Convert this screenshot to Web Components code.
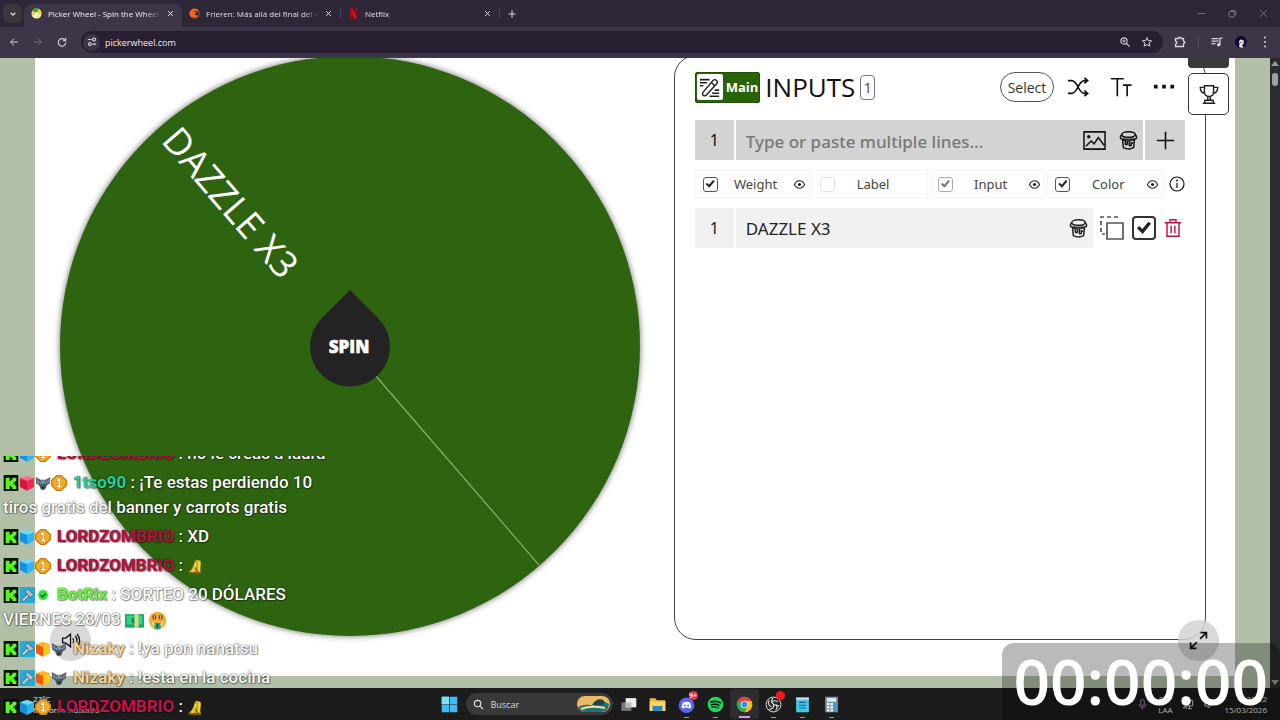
<!DOCTYPE html>
<html lang="es">
<head>
<meta charset="utf-8">
<title>Picker Wheel - Spin the Wheel to Decide</title>
<style>
html,body{height:100%;margin:0}
body{background:#1c1c1c;font-family:"Open Sans","Noto Sans",sans-serif;overflow:hidden}
</style>
</head>
<body>
<stream-scene></stream-scene>
<script>
const stroke = (d, w = 1.8, extra = '') => `<g fill="none" stroke="currentColor" stroke-width="${w}" ${extra}>${d}</g>`;
const cube = (a, b, c) => `<path d="M12 1 22.500 5v13L12 23.500 1.500 18V5z" fill="${a}"/><path d="M1.500 5 12 9v14.500L1.500 18z" fill="${b}"/><path d="M22.500 5 12 9v14.500L22.500 18z" fill="${c}"/>`;
const ICONS = {
  down: stroke('<path d="m5 8 7 7 7-7"/>', 4),
  back: stroke('<path d="M21 12H4M12 4l-8 8 8 8"/>', 2.4),
  forward: stroke('<path d="M3 12h17M12 4l8 8-8 8"/>', 2.4),
  reload: stroke('<path d="M19.500 8A9 9 0 1 0 21 13"/><path d="M21 2v7h-7"/>', 2.6),
  tune: stroke('<path d="M2 6h9M13 17h9"/><circle cx="17" cy="6" r="3.500"/><circle cx="7" cy="17" r="3.500"/>', 2.6),
  close: stroke('<path d="m4 4 16 16M20 4 4 20"/>', 3.4),
  thinclose: stroke('<path d="m3 3 18 18M21 3 3 21"/>', 2),
  plus: stroke('<path d="M12 1v22M1 12h22"/>', 3.4),
  bigplus: stroke('<path d="M12 1v22M1 12h22"/>', 2),
  minimize: stroke('<path d="M2 12h20"/>', 2),
  restore: stroke('<rect x="3" y="7" width="14" height="14" rx="3"/><path d="M8 4h9q4 0 4 4v9"/>', 2.4),
  zoom: stroke('<circle cx="9.500" cy="9.500" r="7.500"/><path d="m15 15 8 8M9.500 6v7M6 9.500h7"/>', 2.6),
  star: stroke('<path d="m12 1.500 3 7 8 .7-6 5.200 1.900 7.600-6.900-4-6.900 4L7 14.400 1 9.200l8-.7z"/>', 2.4),
  puzzle: stroke('<path d="M3 5h6a2.500 2.500 0 0 1 5 0h5v5.500a2.500 2.500 0 0 1 0 5V21H3v-4.500a3 3 0 0 0 0-6z"/>', 2.6),
  media: stroke('<path d="M1 5h14M1 10h14M1 15h8M18 17V4h5"/>', 2.5) + '<circle cx="15.500" cy="17.500" r="3.500" fill="currentColor"/>',
  dotsv: '<g fill="currentColor"><circle cx="12" cy="3" r="2"/><circle cx="12" cy="12" r="2"/><circle cx="12" cy="21" r="2"/></g>',
  dotsh: '<path fill="currentColor" d="M1 9.500h4v4H1zM10 9.500h4v4h-4zM19 9.500h4v4h-4z"/>',
  picker: '<circle cx="12" cy="12" r="11" fill="#e9d94a"/><path d="M12 12 3 5.500A11 11 0 0 1 17 2.200z" fill="#4f9a43"/><path d="M12 12 17 2.200A11 11 0 0 1 22.500 14z" fill="#e6d83c"/><path d="M12 12 22.500 14A11 11 0 0 1 12 23z" fill="#f1e9a0"/><path d="M12 12 2 17a11 11 0 0 0 9 6z" fill="#e7f0ee"/><circle cx="12" cy="12" r="3" fill="#fff"/>',
  crunchy: '<circle cx="12" cy="12" r="11" fill="#f26522"/><path d="M22.500 12a8 8 0 0 0-15.500 2q0 4 3 7 9 3 12.500-9z" fill="#2e2737"/><path d="M13 7.500a7 7 0 1 0 7 8 3.800 3.800 0 1 1-2.500-6.500 8 8 0 0 0-4.500-1.500z" fill="#f26522"/>',
  netflix: '<path d="M5 1h5v22l-5 .5z" fill="#b1060f"/><path d="M14 1h5v22.500l-5-.5z" fill="#b1060f"/><path d="M5 1h5l9 22.500-5-.5z" fill="#e50914"/>',
  avatar: '<circle cx="12" cy="12" r="12" fill="#0d0a45"/><path d="M7 6q6-4 10 2l1 6q-2 4-4 4l3 5q-6 2-9-2l1-5z" fill="#eed7d5"/><path d="M4 9Q7 1 16 4l2 4-7-1-3 3-1 6q-4-3-3-7z" fill="#08050f"/><path d="M10 13h3M15 12h2" stroke="#a3394a" stroke-width="1.500"/>',
  edit: stroke('<path d="m5 17 11-13q2-2 4 0t0 4L9 20q-2 2.500-4 1t0-4zM14 6l4 4"/>', 1.6) + stroke('<path d="M1 3h11M1 6.500h8M1 10h4M18 15h5M15 18.500h8M12 22h11"/>', 1.8),
  shuffle: stroke('<path d="M1 5h4c7 0 7 14 14 14h3M1 19h4c7 0 7-14 14-14h3M19 2l3.500 3L19 8M19 16l3.500 3-3.500 3"/>', 1.8),
  texts: stroke('<path d="M1 3h14M8 3v19M14 10h9.500M18.700 10v12"/>', 1.8),
  picture: stroke('<path d="M1 3h22v18H1zM3 18l5.500-5.500 3 3L16 9l6 8"/>', 1.6) + '<circle cx="6" cy="8" r="1.800" fill="currentColor"/>',
  bucket: stroke('<ellipse cx="12" cy="4.500" rx="8.500" ry="3.500"/><path d="M3.500 4.500Q0 9 3.500 10q8.500 3 17 0 3.500-1 0-5.500M4.500 11l1 10q6.500 3.500 13 0l1-10"/><path d="M8 11.500v5q1.200 1.500 2.500 0v-4M13 12v6q1.200 1.500 2.500 0v-3q1.500 1.500 2-.5"/>', 1.9) + '<path d="M5 7q7 2.500 14 0v2.500q-7 2.500-14 0z" fill="currentColor" opacity=".45"/>',
  eye: stroke('<path d="M1 12q4-8 11-8t11 8q-4 8-11 8T1 12z"/>', 2.3) + '<circle cx="12" cy="12" r="3.500" fill="currentColor"/>',
  info: stroke('<circle cx="12" cy="12" r="10.500"/><path d="M12 10v8"/>', 1.8) + '<circle cx="12" cy="6.700" r="1.400" fill="currentColor"/>',
  duplicate: stroke('<path d="M7 7h16v16H7z"/>', 1.7) + stroke('<path d="M18 1H1v17h4"/>', 1.7, 'stroke-dasharray="4 3"'),
  trash: stroke('<path d="M1 5h22M4 5v18h16V5M8 5V1h8v4M9.500 9v10M14.500 9v10"/>', 1.9),
  trophy: stroke('<path d="M6.500 2h11v7q0 6-5.500 6t-5.500-6zM6.500 4H1.500q0 7 5.500 7M17.500 4h5q0 7-5.500 7M10.500 15v4M13.500 15v4M7 23v-3.500h10V23zM4.500 23h15"/>', 1.7),
  sound: stroke('<path d="M2 9h4l6-5v16l-6-5H2zM15 9q2 3 0 6M18 6q4.500 6 0 12M20.500 3.500q6 8.500 0 17"/>', 1.7),
  expand: stroke('<path d="m14 10 8-8M14.500 2H22v7.500M10 14l-8 8M2 14.500V22h7.500"/>', 2.2),
  search: stroke('<circle cx="10" cy="10" r="7"/><path d="m15 15 7 7"/>', 2.4),
  windows: '<path d="M1 1h10.500v10.500H1zM12.500 1H23v10.500H12.500zM1 12.500h10.500V23H1zM12.500 12.500H23V23H12.500z" fill="#43b9f3"/><path d="M1 1h10.500v10.500H1z" fill="#86dcfb"/>',
  taskview: '<path d="M2 9h14v12H2z" fill="#777"/><path d="M8 3h15v13H8z" fill="#eee"/><path d="M8 9h8v7H8z" fill="#bbb"/>',
  folder: '<path d="M1 3h8l2 3h12v15H1z" fill="#f2b63c"/><path d="M1 8h22v13H1z" fill="#ffd866"/><path d="M5 14h14v7H5z" fill="#2088c7"/>',
  discord: '<circle cx="12" cy="13" r="11" fill="#5865f2"/><path d="M7 9q5-2 10 0l2 7-3 2-1.500-1.500h-5L8 18l-3-2z" fill="#fff"/><circle cx="9.700" cy="13.300" r="1.400" fill="#5865f2"/><circle cx="14.300" cy="13.300" r="1.400" fill="#5865f2"/>',
  spotify: '<circle cx="12" cy="12" r="11" fill="#1ed760"/><g fill="none" stroke="#151515" stroke-linecap="round"><path d="M5.500 8.500q7-2.500 13.500 1" stroke-width="2.400"/><path d="M6 12.500q6-2 11.500 1" stroke-width="2"/><path d="M6.500 16q5-1.500 9.500 1" stroke-width="1.800"/></g>',
  chrome: '<circle cx="12" cy="12" r="11" fill="#34a853"/><path d="M12 12 2.500 6.500A11 11 0 0 1 21.500 6.500z" fill="#ea4335"/><path d="M12 7h9.800A11 11 0 0 1 12 23l5-9z" fill="#fbbc04"/><circle cx="12" cy="12" r="5.300" fill="#fff"/><circle cx="12" cy="12" r="4.200" fill="#4285f4"/>',
  obs: '<circle cx="12" cy="12" r="10.500" fill="#222" stroke="#ddd" stroke-width="1.400"/><g fill="none" stroke="#ddd" stroke-width="1.700"><path d="M11 3q-4 6 2 9M20 14q-7-2-8-1M6 19q7-1 6-7"/><path d="M6 6q-3 7 3 9M18 8q-6-3-9 1M15 20q4-4 0-8"/></g>',
  notepad: '<path d="M3 3h18v20H3z" fill="#49c5e8"/><path d="M3 2h18v3H3z" fill="#d7e7ee"/><path d="M7 9h10M7 13h10M7 17h10" stroke="#12668a" stroke-width="1.600"/>',
  calc: '<path d="M3 1h18v22H3z" fill="#7592a5"/><path d="M5.500 3h13v5h-13z" fill="#d6f0ff"/><path d="M5.500 10h3.500v3H5.500zM10.500 10H14v3h-3.500zM5.500 14.500h3.500v3H5.500zM10.500 14.500H14v3h-3.500zM5.500 19h3.500v3H5.500zM10.500 19H14v3h-3.500z" fill="#fff"/><path d="M15.500 10h3v12h-3z" fill="#2e9bdc"/>',
  mic: stroke('<rect x="8" y="1" width="8" height="13" rx="4"/><path d="M4 11q0 7 8 7t8-7M12 18v5"/>', 2),
  net: stroke('<path d="M6 3h15v12H6zM2 21v-4h5v5M11 21h8M14 15v6"/>', 2),
  vol: stroke('<path d="M2 9h4l5-4v14l-5-4H2zM15 8q3 4 0 8"/>', 2),
  k: '<path d="M1 0h22v24H1z" fill="#061006"/><path d="M4 4h6v5h2V7h2V4h6v5h-2v2h-2v3h2v2h2v5h-6v-3h-2v-2h-2v5H4z" fill="#53fc18"/>',
  cubeblue: cube('#6fd8fa', '#1691dc', '#2fb6ef'),
  cubepink: cube('#ff6a8e', '#d0193f', '#ed2a57'),
  cubeorange: cube('#ffb52e', '#ee5a10', '#ffc917'),
  coin: '<path d="M8 0h8l8 8v8l-8 8H8l-8-8V8z" fill="#c97d10"/><path d="M9 2h6l7 7v6l-7 7H9l-7-7V9z" fill="#f9ad20"/><path d="M8 7l3.500-2.500H14V16h2v3H8.500v-3H11V9H8z" fill="#fff" stroke="#a8690c" stroke-width=".7"/>',
  wolf: '<path d="m1 3 7 4h8l7-4-1 10-4 2-3 7h-6l-3-7-4-2z" fill="#4b535d"/><path d="m2 5 5 4-1 4-3-1zM22 5l-5 4 1 4 3-1z" fill="#87788f"/><path d="M8 8h8l-4 7z" fill="#8a949e"/><path d="M6 11h4l-1 3zM18 11h-4l1 3z" fill="#3fd0ff"/><path d="M10 18h4l-2 3z" fill="#161a20"/>',
  hammer: '<path d="M1 0h23v24H1z" fill="#25a9d8"/><path d="m4 19 9-9 3 3-9 9z" fill="#c3cdd2" stroke="#2c5566"/><path d="m9 7 4-4 9 8-5 5z" fill="#b0bdc4" stroke="#2c5566"/>',
  verified: '<path d="m12 1 3.500 2 4 .5.500 4.500L23 12l-3 4-.5 4.500-4 .5-3.500 2-3.500-2-4-.5L4 16l-3-4 3-4 .5-4.500 4-.5z" fill="#35e13c"/><path d="m7 12 4 4 6.500-7" fill="none" stroke="#0b6b18" stroke-width="2.500"/>',
  bell: '<path d="M2 20q5-3 8-11l2-6q2-3 6-1 4 1 3 6l-1 8 1 5z" fill="#c9ab22"/><path d="M13 6q-1 9-6 14M18 3q1 8-1 17" stroke="#efdb4a" stroke-width="2.500" fill="none"/><path d="m1 20 9 0 12 0-2 3-17-1z" fill="#7a551a"/><path d="m12 13 5 7" stroke="#7a641a" stroke-width="2"/>',
  cash: '<path d="M0 4h24v17H0z" fill="#14a866"/><path d="M2 6h20v11H2z" fill="#35cf88"/><circle cx="12" cy="12" r="4" fill="#0f8d55"/><path d="M12 4h5v17h-5z" fill="#e4d98b"/>',
  rich: '<circle cx="12" cy="12" r="11" fill="#f8ab36"/><ellipse cx="8" cy="8" rx="2.500" ry="3.500" fill="#7b5412"/><ellipse cx="16" cy="8" rx="2.500" ry="3.500" fill="#7b5412"/><path d="M8 5v6M16 5v6" stroke="#eedd98"/><path d="M5 14q7 4 14 0-1 6-7 6t-7-6z" fill="#fff"/><path d="M8 15h8v7q-4 3-8 0z" fill="#28a767"/><path d="M12 16v5" stroke="#0b5a34" stroke-width="2"/>'
};

/* Small helper: every component declares its CSS and markup once. */
function define(name, css, html) {
  customElements.define(name, class extends HTMLElement {
    constructor() {
      super();
      const root = this.attachShadow({mode: 'open'});
      const t = document.createElement('template');
      t.innerHTML = `<style>*{box-sizing:border-box}button,input{font:inherit;color:inherit;border:0;padding:0;margin:0;background:none}button{display:grid;place-items:center}a{color:inherit;text-decoration:none}${css}</style>` + (typeof html === 'function' ? '' : html);
      root.append(t.content.cloneNode(true));
    }
    connectedCallback() {
      if (typeof html === 'function' && !this.ready) {
        const t = document.createElement('template');
        t.innerHTML = html(this);
        this.shadowRoot.append(t.content.cloneNode(true));
      }
      this.ready = true;
    }
  });
}

define('ui-icon', ':host{display:inline-block;width:var(--size,16px);height:var(--size,16px);flex:none}svg{display:block;width:100%;height:100%;overflow:visible}',
  el => `<svg viewBox="0 0 24 24" aria-hidden="true">${ICONS[el.getAttribute('name')]}</svg>`);

define('browser-tab', `
  :host{display:block;flex:0 1 158px;min-width:0;font-size:8px;color:#e2dde8}
  .tab{height:23px;display:flex;align-items:center;gap:6px;padding:0 8px 4px 7px;border-radius:7px 7px 0 0}
  :host([active]) .tab{background:#3d3548;color:#f4f1f7}
  a{flex:1;min-width:0;overflow:hidden;white-space:nowrap;font-weight:500;mask-image:linear-gradient(90deg,#000 86%,transparent)}
  .fav{--size:11px}button ui-icon{--size:7px}`,
  el => `<div class="tab"><ui-icon class="fav" name="${el.getAttribute('icon')}"></ui-icon><a href="#"><slot></slot></a><button aria-label="Cerrar"><ui-icon name="close"></ui-icon></button></div>`);

define('browser-tabs', `
  :host{display:flex;align-items:end;height:27px;background:#2e2737;color:#d5cedc;padding:0 12px 0 3px}
  .list{align-self:center;width:19px;height:19px;border-radius:6px;background:#3b363c;margin-right:2px;--size:8px}
  .line{width:1px;height:11px;margin-bottom:8px;background:#4a4353}
  .new{height:23px;padding:0 8px 4px;--size:8px}
  .win{margin-left:auto;display:flex;gap:22px;height:23px;padding-bottom:4px;color:#8b8493;--size:9px}`,
  `<button class="list" aria-label="Buscar pestañas"><ui-icon name="down"></ui-icon></button>
  <browser-tab active icon="picker">Picker Wheel - Spin the Wheel to Decide</browser-tab>
  <browser-tab icon="crunchy">Frieren: Más allá del final del viaje</browser-tab><span class="line"></span>
  <browser-tab icon="netflix">Netflix</browser-tab><span class="line"></span>
  <button class="new" aria-label="Nueva pestaña"><ui-icon name="plus"></ui-icon></button>
  <div class="win"><button aria-label="Minimizar"><ui-icon name="minimize"></ui-icon></button><button aria-label="Restaurar"><ui-icon name="restore"></ui-icon></button><button aria-label="Cerrar"><ui-icon name="thinclose"></ui-icon></button></div>`);

define('browser-toolbar', `
  :host{box-sizing:border-box;display:flex;align-items:center;height:31px;background:#3d3548;color:#d9d2e2;padding:0 9px 1px;gap:14px;--size:10px}
  .off{color:#776d83}
  .bar{flex:1;display:flex;align-items:center;height:22px;background:#281f31;border-radius:11px;padding:0 11px 0 2px;gap:12px}
  .site{width:17px;height:17px;border-radius:50%;background:#3d3548}
  input{flex:1;min-width:0;font-size:9px;font-weight:500;color:#f0edf3;outline:0;margin-left:-7px}
  .tools{display:flex;align-items:center;gap:12px;--size:12px;margin-left:-3px}
  .sep{width:1px;height:10px;background:#5a5166}`,
  `<button aria-label="Atrás"><ui-icon name="back"></ui-icon></button><button class="off" aria-label="Adelante"><ui-icon name="forward"></ui-icon></button><button aria-label="Recargar"><ui-icon name="reload"></ui-icon></button>
  <div class="bar"><button class="site" aria-label="Información del sitio"><ui-icon name="tune"></ui-icon></button><input aria-label="Dirección" value="pickerwheel.com"><button aria-label="Zoom"><ui-icon name="zoom"></ui-icon></button><button aria-label="Favorito"><ui-icon name="star"></ui-icon></button></div>
  <div class="tools"><button aria-label="Extensiones"><ui-icon name="puzzle"></ui-icon></button><span class="sep"></span><button aria-label="Medios"><ui-icon name="media"></ui-icon></button><button aria-label="Perfil"><ui-icon name="avatar"></ui-icon></button><button aria-label="Menú"><ui-icon name="dotsv"></ui-icon></button></div>`);

define('picker-wheel', `
  :host{display:grid;place-items:start center;padding-right:8px}
  svg{width:600px;max-width:100%;margin-top:-12px;overflow:visible;display:block}
  .disc{filter:drop-shadow(0 0 3px rgba(0,0,0,.6))}
  text{fill:#fff}
  .name{font-size:37px}
  .spin{font-size:17px;font-weight:800;text-anchor:middle;stroke:#fff;stroke-width:.5px}`,
  `<svg viewBox="0 0 600 600" role="img" aria-label="Ruleta">
  <circle class="disc" cx="300" cy="300" r="290" fill="#2e6410"/>
  <g transform="rotate(49.200 300 300)"><path d="M300 300h289" stroke="#8db06f" stroke-width="1.200"/><text class="name" x="21" y="310">DAZZLE X3</text></g>
  <path d="M300 244 328 272A40 40 0 1 1 272 272z" fill="#232323"/>
  <text class="spin" x="299" y="307">SPIN</text></svg>`);

define('check-box', `
  :host{display:contents}
  input{appearance:none;flex:none;width:24px;height:24px;border:2px solid #333;border-radius:4px;display:grid;place-items:center;color:#222}
  input:checked::before{content:"";width:14px;height:14px;background:currentColor;clip-path:polygon(0 52%,16% 36%,38% 58%,82% 6%,100% 20%,40% 92%)}`,
  el => `<input type="checkbox" aria-label="${el.getAttribute('label')}" ${el.hasAttribute('checked') ? 'checked' : ''}>`);

define('column-toggle', `
  :host{box-sizing:border-box;display:flex;align-items:center;min-width:0;height:28px;padding:0 3px 0 7px;border:1px solid #f4f4f4;font-family:"Noto Sans",sans-serif;color:#444}
  label{flex:1;text-align:center;font-size:13px}
  .slot{width:13px;height:13px;--size:11px;color:#222}
  input{appearance:none;flex:none;width:15px;height:15px;border:1px solid #555;border-radius:3px;display:grid;place-items:center;color:#222}
  input:checked::before{content:"";width:9px;height:9px;background:currentColor;clip-path:polygon(0 52%,16% 36%,38% 58%,82% 6%,100% 20%,40% 92%)}
  input:disabled{color:#777;border-color:#aaa}
  input:not(:checked){border-color:#e4e4e4}`,
  el => `<input id="c" type="checkbox" ${el.hasAttribute('checked') ? 'checked' : ''} ${el.hasAttribute('disabled') ? 'disabled' : ''}><label for="c"><slot></slot></label>${el.hasAttribute('eye') ? '<button class="slot" aria-label="Mostrar"><ui-icon name="eye"></ui-icon></button>' : '<span class="slot"></span>'}`);

define('inputs-panel', `
  :host{display:block;background:#fff;border:1px solid #444;border-radius:22px;margin-top:-3px;padding:15px 20px;color:#111}
  header{display:flex;align-items:center;height:32px}
  .main{display:flex;align-items:center;height:31px;padding:1px;background:#2a6306;border:1px solid #234f08;border-radius:2px;color:#fff;font-weight:700;font-size:13px;gap:3px}
  .main i{display:grid;place-items:center;width:26px;height:26px;background:#fff;color:#222;--size:21px;border-radius:2px}
  h2{margin:0 5px;font-size:26px;font-weight:500;line-height:32px}
  .count{border:1px solid #777;border-radius:4px;width:15px;height:25px;font-size:14px;line-height:23px;text-align:center;color:#444}
  .acts{margin-left:auto;display:flex;align-items:center;gap:21px;--size:22px;padding-right:10px}
  .select{height:30px;width:54px;border:1px solid #555;border-radius:15px;font-size:14px;color:#333;margin-right:-8px}
  .row{display:flex;gap:2px;height:40px;font-size:17px;font-family:"Noto Sans",sans-serif}
  .num{flex:none;width:39px;display:grid;place-items:center;font-size:16px}
  .cell{flex:1;min-width:0;display:flex;align-items:center}
  .entry .num,.entry .cell,.entry .add{background:#d3d3d3}
  .entry{margin-top:17px}
  .entry .cell{padding:0 5px 0 10px;gap:13px}
  input{flex:1;min-width:0;height:100%;outline:0}
  .entry input{padding-top:3px}
  input::placeholder{color:#777;opacity:1;font-weight:500}
  .add{width:40px;--size:19px}
  .pic{--size:23px}.paint{--size:19px}
  .cols{display:grid;grid-template-columns:repeat(4,minmax(0,1fr)) 20px;gap:2px;align-items:center;margin:10px 0;--size:16px}
  .cols button{justify-self:end}
  .item .num,.item .cell{background:#f1f1f1;color:#222}
  .item .cell{padding:0 5px 0 10px}
  .tools{display:flex;align-items:center;gap:8px;padding-left:5px;padding-right:3px}
  .dup{--size:24px;color:#555}.del{--size:18px;color:#b8123e}`,
  `<header><button class="main"><i><ui-icon name="edit"></ui-icon></i>Main</button><h2>INPUTS</h2><span class="count">1</span>
  <div class="acts"><button class="select">Select</button><button aria-label="Mezclar"><ui-icon name="shuffle"></ui-icon></button><button aria-label="Texto"><ui-icon name="texts"></ui-icon></button><button aria-label="Más"><ui-icon name="dotsh"></ui-icon></button></div></header>
  <div class="row entry"><span class="num">1</span><div class="cell"><input aria-label="Entrada" placeholder="Type or paste multiple lines..."><button class="pic" aria-label="Imagen"><ui-icon name="picture"></ui-icon></button><button class="paint" aria-label="Color"><ui-icon name="bucket"></ui-icon></button></div><button class="add" aria-label="Añadir"><ui-icon name="bigplus"></ui-icon></button></div>
  <div class="cols"><column-toggle checked eye>Weight</column-toggle><column-toggle>Label</column-toggle><column-toggle checked disabled eye>Input</column-toggle><column-toggle checked eye>Color</column-toggle><button aria-label="Información"><ui-icon name="info"></ui-icon></button></div>
  <div class="row item"><span class="num">1</span><div class="cell"><input aria-label="Entrada 1" value="DAZZLE X3"><button class="paint" aria-label="Color"><ui-icon name="bucket"></ui-icon></button></div>
  <div class="tools"><button class="dup" aria-label="Duplicar"><ui-icon name="duplicate"></ui-icon></button><check-box checked label="Activa"></check-box><button class="del" aria-label="Eliminar"><ui-icon name="trash"></ui-icon></button></div></div>`);

define('round-button', `
  :host{display:block}
  button{width:41px;height:41px;border-radius:50%;background:rgba(210,210,210,.85);color:#111;--size:19px}`,
  el => `<button aria-label="${el.getAttribute('label')}"><ui-icon name="${el.getAttribute('icon')}"></ui-icon></button>`);

define('page-view', `
  :host{display:flex;flex:1;min-height:0;overflow:hidden;background:#b3c0a8;position:relative}
  .page{flex:1;min-width:0;padding:0 35px 12px;display:grid}
  main{background:#fff;position:relative;min-width:0;min-height:0;padding:0 29px 36px 0;display:grid;grid-template:minmax(0,1fr)/minmax(0,1.2fr) minmax(0,1fr)}
  aside{position:absolute;top:0;right:6px;width:41px;display:grid;gap:5px}
  .dark{height:10px;background:#3a3a3a;border-radius:0 0 4px 4px}
  .cup{height:42px;background:#fff;border:1px solid #333;border-radius:5px;color:#222;--size:20px}
  .sound{position:absolute;left:15px;bottom:15px}
  .full{position:absolute;right:16px;bottom:15px}
  .scroll{width:10px;background:#2b2d2b;display:flex;flex-direction:column;align-items:center;padding:3px 0}
  .scroll b{border:4px solid transparent;border-top:0;border-bottom:5px solid #999}
  .scroll b:last-child{border-top:5px solid #999;border-bottom:0;margin-top:auto}
  .thumb{width:6px;height:13px;border-radius:3px;background:#a0a0a0;margin-top:7px}`,
  `<div class="page"><main><picker-wheel></picker-wheel><inputs-panel></inputs-panel>
  <aside><span class="dark"></span><button class="cup" aria-label="Resultados"><ui-icon name="trophy"></ui-icon></button></aside>
  <round-button class="sound" label="Sonido" icon="sound"></round-button><round-button class="full" label="Pantalla completa" icon="expand"></round-button></main></div>
  <div class="scroll"><b></b><span class="thumb"></span><b></b></div>`);

define('task-app', `
  :host{display:block;position:relative}
  button{width:29px;height:30px;border-radius:4px;--size:17px}
  :host([open])::after{content:"";position:absolute;left:12px;right:12px;bottom:1px;height:1px;background:#999}
  :host([current]) button{background:#2e2c2e}
  :host([current])::after{left:9px;right:9px;height:2px;background:#d49be0}
  span{position:absolute;right:3px;top:2px;min-width:9px;height:9px;border-radius:5px;background:#e5344a;color:#fff;font-size:7px;line-height:9px;text-align:center;font-weight:600}
  :host([badge=""]) span{background:#f01818}`,
  el => `<button aria-label="${el.getAttribute('icon')}"><ui-icon name="${el.getAttribute('icon')}"></ui-icon></button>${el.hasAttribute('badge') ? `<span>${el.getAttribute('badge')}</span>` : ''}`);

define('task-bar', `
  :host{display:grid;grid-template-columns:1fr auto 1fr;align-items:center;height:32px;background:#1c1c1c;color:#e6e6e6;font-size:8px;line-height:11px}
  .weather{padding-left:33px}
  .apps{display:flex;align-items:center}
  .find{display:flex;align-items:center;width:147px;height:22px;border-radius:11px;background:#393939;padding:0 3px 0 7px;gap:7px;margin:0 1px 0 2px;font-size:9px;--size:11px}
  .find input{flex:1;min-width:0;outline:0}.find input::placeholder{color:#d8d8d8;opacity:1}
  .find svg{width:33px;height:16px}
  .tray{justify-self:end;display:flex;align-items:center;gap:10px;padding-right:13px;text-align:right;--size:11px}
  .mic{color:#b48abf}`,
  `<div class="weather">27°C<br>Mayorm. nublado</div>
  <div class="apps"><task-app icon="windows"></task-app><div class="find"><ui-icon name="search"></ui-icon><input aria-label="Buscar" placeholder="Buscar"><svg viewBox="0 0 33 16"><rect width="33" height="16" rx="8" fill="#e9b965"/><path d="M1 11q8-4 15-1 8-8 16-2-1 8-8 8H8q-5 0-7-5z" fill="#1e7278"/><path d="M15 9q5-8 11-5 3 2 0 5z" fill="#184640"/><path d="M4 13q10-4 24-1" stroke="#f2dfa0" stroke-width="2" fill="none"/></svg></div>
  <task-app icon="taskview"></task-app><task-app icon="folder"></task-app><task-app icon="discord" open badge="9+"></task-app><task-app icon="spotify" open></task-app><task-app icon="chrome" open current></task-app><task-app icon="obs" open badge=""></task-app><task-app icon="notepad" open></task-app><task-app icon="calc" open></task-app></div>
  <div class="tray"><ui-icon class="mic" name="mic"></ui-icon><span>ESP<br>LAA</span><ui-icon name="net"></ui-icon><ui-icon name="vol"></ui-icon><time>20:22<br>15/03/2026</time></div>`);

define('chat-message', `
  :host{display:block;line-height:25px;margin-top:4px;color:#fff}
  .badges{display:inline-flex;vertical-align:-3px;--size:16px;margin-right:6px}
  .small{--size:12px;margin:2px}
  b{font-weight:700}
  ::slotted(ui-icon){--size:19px;vertical-align:-5px;margin-right:4px}
  ::slotted(ui-icon[name=bell]){--size:16px;vertical-align:-4px}`,
  el => `<span class="badges">${el.getAttribute('badges').split(' ').map(n => `<ui-icon name="${n}" ${n === 'verified' ? 'class="small"' : ''}></ui-icon>`).join('')}</span><b style="color:${el.getAttribute('color')}">${el.getAttribute('user')}</b> : <slot></slot>`);

define('chat-overlay', `
  :host{box-sizing:border-box;display:flex;flex-direction:column;justify-content:flex-end;overflow:hidden;width:339px;height:264px;padding:0 0 1px 3px;font:500 17px Roboto,sans-serif;text-shadow:0 0 1px rgba(0,0,0,.6),0 0 2px rgba(0,0,0,.5),1px 1px 1px rgba(0,0,0,.3)}
  chat-message{flex:none}`,
  `<chat-message badges="k cubeblue coin" user="LORDZOMBRIO" color="#b9103f">no le creas a laura</chat-message>
  <chat-message badges="k cubepink wolf coin" user="1tso90" color="#1ed29a">¡Te estas perdiendo 10 tiros gratis del banner y carrots gratis</chat-message>
  <chat-message badges="k cubeblue coin" user="LORDZOMBRIO" color="#b9103f">XD</chat-message>
  <chat-message badges="k cubeblue coin" user="LORDZOMBRIO" color="#b9103f"><ui-icon name="bell"></ui-icon></chat-message>
  <chat-message badges="k hammer verified" user="BotRix" color="#6af545">SORTEO 20 DÓLARES VIERNES 28/03 <ui-icon name="cash"></ui-icon><ui-icon name="rich"></ui-icon></chat-message>
  <chat-message badges="k hammer cubeorange wolf" user="Nizaky" color="#f8d39a">!ya pon nanatsu</chat-message>
  <chat-message badges="k hammer cubeorange wolf" user="Nizaky" color="#f8d39a">!esta en la cocina</chat-message>
  <chat-message badges="k cubeblue coin" user="LORDZOMBRIO" color="#c8104a"><ui-icon name="bell"></ui-icon></chat-message>`);

define('stream-timer', `
  :host{box-sizing:border-box;display:block;background:rgba(0,0,0,.27);border-radius:12px 12px 0 0;color:#fff;font-size:64px;font-weight:600;line-height:76px;height:77px;padding:0 12px 0 11px;text-align:center}`,
  `<time>00:00:00</time>`);

define('stream-scene', `
  :host{display:flex;flex-direction:column;height:100vh;position:relative;overflow:hidden}
  chat-overlay{position:absolute;left:0;bottom:0}
  stream-timer{position:absolute;right:0;bottom:0}`,
  `<browser-tabs></browser-tabs><browser-toolbar></browser-toolbar><page-view></page-view><task-bar></task-bar><chat-overlay></chat-overlay><stream-timer></stream-timer>`);
</script>
</body>
</html>
